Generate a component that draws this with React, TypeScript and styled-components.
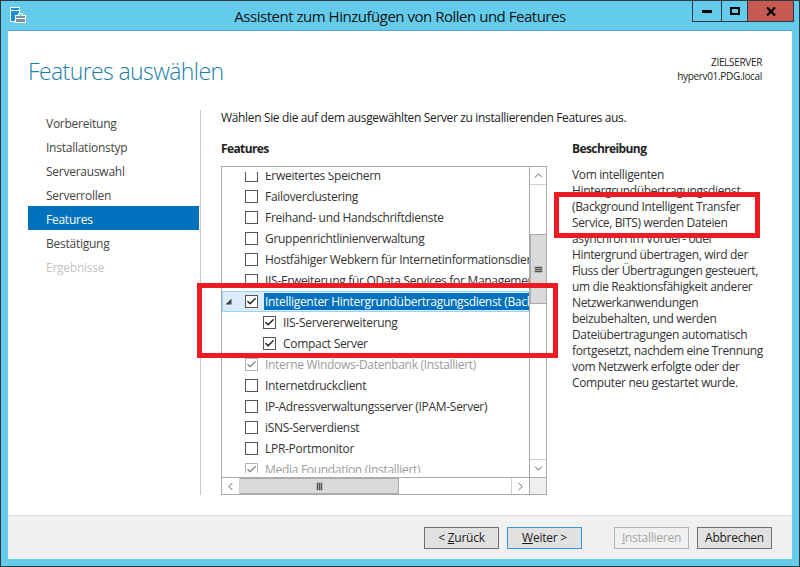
import React from "react";
import styled, { createGlobalStyle } from "styled-components";
import { ChevronUp, ChevronDown, ChevronLeft, ChevronRight, Check } from "lucide-react";

const GlobalStyle = createGlobalStyle`
  html, body { margin: 0; padding: 0; background: #65cbeb; }
  body { font-family: "Open Sans", "Noto Sans", sans-serif; font-size: 12px; letter-spacing: -0.25px; }
  * { box-sizing: border-box; }
`;

const Window = styled.div`
  position: relative;
  width: 800px;
  height: 567px;
  display: flex;
  flex-direction: column;
  background: #65cbeb;
  border: 1px solid #2f3a40;
  overflow: hidden;
`;

const TitleBar = styled.div`
  height: 30px;
  flex: none;
  display: flex;
  align-items: flex-start;
  position: relative;
`;

const AppIcon = styled.svg`
  margin: 6px 0 0 9px;
  flex: none;
`;

const Title = styled.div`
  position: absolute;
  left: 0;
  right: 0;
  top: 5px;
  text-align: center;
  font-size: 15px;
  letter-spacing: -0.48px;
  color: #0c1418;
`;

const Controls = styled.div`
  margin-left: auto;
  margin-right: 5px;
  display: flex;
  height: 21px;
  border: 1px solid #2f3a40;
  border-top: none;
`;

const Control = styled.div<{ $w: number; $close?: boolean }>`
  width: ${(p) => p.$w}px;
  display: flex;
  align-items: center;
  justify-content: center;
  background: ${(p) => (p.$close ? "#c75a50" : "transparent")};
  & + & { border-left: 1px solid #2f3a40; }
`;

const Dialog = styled.div`
  flex: 1;
  margin: 0 7px 7px 7px;
  display: flex;
  flex-direction: column;
  background: #fff;
  min-height: 0;
  box-shadow: 0 -1px 0 #5aa6c4;
`;

const Head = styled.div`
  height: 79px;
  flex: none;
  display: flex;
  justify-content: space-between;
  padding: 24px 30px 0 20px;
`;

const Heading = styled.h1`
  margin: 0;
  font-weight: 300;
  font-size: 23px;
  letter-spacing: -0.6px;
  line-height: 32px;
  color: #1b7fa6;
`;

const ServerInfo = styled.div`
  text-align: right;
  font-size: 10px;
  line-height: 14px;
  letter-spacing: -0.32px;
  color: #1c1c1c;
`;

const Body = styled.div`
  flex: 1;
  display: flex;
  min-height: 0;
  padding-left: 20px;
`;

const Sidebar = styled.nav`
  width: 172px;
  flex: none;
  height: 385px;
`;

const NavItem = styled.div<{ $active?: boolean; $disabled?: boolean }>`
  width: 171px;
  height: 24px;
  line-height: 27px;
  padding-left: 18px;
  background: ${(p) => (p.$active ? "#0071bc" : "transparent")};
  color: ${(p) => (p.$active ? "#fff" : p.$disabled ? "#c4c4c4" : "#444")};
`;

const Main = styled.div`
  width: 543px;
  flex: none;
  height: 385px;
  border-left: 1px solid #c9c9c9;
  padding-left: 20px;
`;

const Intro = styled.div`
  height: 30px;
  line-height: 16px;
  letter-spacing: -0.35px;
  color: #1c1c1c;
`;

const Columns = styled.div`
  display: flex;
  gap: 25px;
`;

const FeatureColumn = styled.div`
  width: 326px;
  flex: none;
`;

const SectionTitle = styled.div`
  font-weight: 700;
  line-height: 18px;
  height: 26px;
  letter-spacing: -0.6px;
  color: #222;
`;

const TreeBox = styled.div`
  width: 326px;
  height: 329px;
  border: 1px solid #ababab;
  display: grid;
  grid-template-columns: 307px 17px;
  grid-template-rows: 310px 17px;
  background: #fff;
`;

const TreeList = styled.div`
  padding: 5px 0 4px;
  min-height: 0;
  letter-spacing: -0.3px;
`;

const TreeViewport = styled.div`
  height: 100%;
  overflow: hidden;
  white-space: nowrap;
`;

const TreeInner = styled.div`
  margin-top: -7px;
`;

const Row = styled.div<{ $selected?: boolean }>`
  position: relative;
  height: 21px;
  display: flex;
  align-items: center;
  padding-left: 22px;
  color: #333;
  border: 1px solid ${(p) => (p.$selected ? "#99d1ff" : "transparent")};
  background: ${(p) => (p.$selected ? "#dcecfb" : "transparent")};
`;

const ChildRow = styled(Row)`
  padding-left: 40px;
`;

const Expander = styled.svg`
  position: absolute;
  left: 2px;
  top: 6px;
`;

const Box = styled.span<{ $dim?: boolean }>`
  width: 13px;
  height: 13px;
  flex: none;
  display: flex;
  align-items: center;
  justify-content: center;
  margin-right: 7px;
  border: 1px solid ${(p) => (p.$dim ? "#b3b3b3" : "#555")};
  color: ${(p) => (p.$dim ? "#8a8a8a" : "#1c1c1c")};
  background: #fff;
`;

const Label = styled.span<{ $dim?: boolean; $selected?: boolean }>`
  color: ${(p) => (p.$selected ? "#fff" : p.$dim ? "#9b9b9b" : "#333")};
  background: ${(p) => (p.$selected ? "#0071bc" : "transparent")};
  line-height: 17px;
  padding: 0 1px;
  margin-left: -1px;
  flex: 1;
`;

const VScroll = styled.div`
  border-left: 1px solid #ababab;
  display: flex;
  flex-direction: column;
  background: #fff;
`;

const ScrollBtn = styled.div`
  flex: none;
  height: 17px;
  display: flex;
  align-items: center;
  justify-content: center;
  color: #555;
`;

const VTrack = styled.div`
  flex: 1;
  padding-top: 49px;
  border-top: 1px solid #d0d0d0;
  border-bottom: 1px solid #d0d0d0;
`;

const VThumb = styled.div`
  height: 70px;
  background: #dadada;
  border: 1px solid #ababab;
  border-right: none;
  display: flex;
  align-items: center;
  justify-content: center;
  flex-direction: column;
  gap: 1px;
`;

const GripH = styled.span`
  width: 7px;
  height: 1px;
  background: #555;
  box-shadow: 0 0 0 0.3px #666;
`;

const HScroll = styled.div`
  border-top: 1px solid #ababab;
  display: flex;
  background: #fff;
`;

const HBtn = styled.div`
  width: 17px;
  flex: none;
  display: flex;
  align-items: center;
  justify-content: center;
  color: #555;
`;

const HTrack = styled.div`
  flex: 1;
  border-left: 1px solid #d0d0d0;
  border-right: 1px solid #d0d0d0;
`;

const HThumb = styled.div`
  width: 159px;
  height: 100%;
  background: #dadada;
  border: 1px solid #ababab;
  border-left: none;
  display: flex;
  align-items: center;
  justify-content: center;
  gap: 1px;
`;

const GripV = styled.span`
  width: 1px;
  height: 7px;
  background: #555;
  box-shadow: 0 0 0 0.3px #666;
`;

const Corner = styled.div`
  background: #f0f0f0;
  border-top: 1px solid #ababab;
  border-left: 1px solid #ababab;
`;

const Description = styled.div`
  width: 195px;
  flex: none;
`;

const DescText = styled.div`
  line-height: 16px;
  color: #333;
  white-space: nowrap;
  letter-spacing: -0.36px;
  margin-top: 1px;
`;

const Footer = styled.div`
  height: 44px;
  flex: none;
  margin-top: auto;
  display: flex;
  align-items: center;
  justify-content: flex-end;
  gap: 8px;
  padding: 0 20px 0 0;
  background: #f0f0f0;
  border-top: 1px solid #dcdcdc;
`;

const Btn = styled.div<{ $focus?: boolean; $disabled?: boolean; $gap?: number }>`
  width: 75px;
  height: 22px;
  display: flex;
  align-items: center;
  justify-content: center;
  background: ${(p) => (p.$disabled ? "#f0f0f0" : "#e1e1e1")};
  border: 1px solid ${(p) => (p.$focus ? "#3d93e8" : p.$disabled ? "#b5b5b5" : "#6f6f6f")};
  color: ${(p) => (p.$disabled ? "#a5a5a5" : "#1c1c1c")};
  margin-right: ${(p) => p.$gap ?? 0}px;
  u { text-decoration: underline; }
`;

const Callout = styled.div<{ $l: number; $t: number; $w: number; $h: number }>`
  position: absolute;
  left: ${(p) => p.$l}px;
  top: ${(p) => p.$t}px;
  width: ${(p) => p.$w}px;
  height: ${(p) => p.$h}px;
  border: 5px solid #ed1c24;
  pointer-events: none;
`;

type Feature = { label: string; checked?: boolean; dim?: boolean };

const beforeFeatures: Feature[] = [
  { label: "Erweitertes Speichern" },
  { label: "Failoverclustering" },
  { label: "Freihand- und Handschriftdienste" },
  { label: "Gruppenrichtlinienverwaltung" },
  { label: "Hostfähiger Webkern für Internetinformationsdienste" },
  { label: "IIS-Erweiterung für OData Services for Management" },
];

const afterFeatures: Feature[] = [
  { label: "Interne Windows-Datenbank (Installiert)", checked: true, dim: true },
  { label: "Internetdruckclient" },
  { label: "IP-Adressverwaltungsserver (IPAM-Server)" },
  { label: "iSNS-Serverdienst" },
  { label: "LPR-Portmonitor" },
  { label: "Media Foundation (Installiert)", checked: true, dim: true },
];

const steps = ["Vorbereitung", "Installationstyp", "Serverauswahl", "Serverrollen", "Features", "Bestätigung", "Ergebnisse"];

const descLines = [
  "Vom intelligenten",
  "Hintergrundübertragungsdienst",
  "(Background Intelligent Transfer",
  "Service, BITS) werden Dateien",
  "asynchron im Vorder- oder",
  "Hintergrund übertragen, wird der",
  "Fluss der Übertragungen gesteuert,",
  "um die Reaktionsfähigkeit anderer",
  "Netzwerkanwendungen",
  "beizubehalten, und werden",
  "Dateiübertragungen automatisch",
  "fortgesetzt, nachdem eine Trennung",
  "vom Netzwerk erfolgte oder der",
  "Computer neu gestartet wurde.",
];

const CheckBox: React.FC<{ checked?: boolean; dim?: boolean }> = ({ checked, dim }) => (
  <Box $dim={dim}>{checked && <Check size={11} strokeWidth={3} />}</Box>
);

const FeatureRow: React.FC<{ item: Feature }> = ({ item }) => (
  <Row>
    <CheckBox checked={item.checked} dim={item.dim} />
    <Label $dim={item.dim}>{item.label}</Label>
  </Row>
);

export default function App() {
  return (
    <>
      <GlobalStyle />
      <Window>
        <TitleBar>
          <AppIcon width="16" height="16" viewBox="0 0 16 16">
            <rect x="0.5" y="0.5" width="9" height="14" fill="#1b8fd0" stroke="#fff" />
            <rect x="1" y="3" width="8" height="1" fill="#fff" />
            <rect x="5.5" y="8.5" width="10" height="7" fill="#7d8f9c" stroke="#fff" />
            <path d="M8.5 8.5V6.5h4v2" fill="#65cbeb" stroke="#fff" />
            <rect x="6" y="11" width="9" height="1" fill="#fff" />
          </AppIcon>
          <Title>Assistent zum Hinzufügen von Rollen und Features</Title>
          <Controls>
            <Control $w={28}>
              <svg width="10" height="4" viewBox="0 0 10 4"><rect width="10" height="3" y="1" fill="#000" /></svg>
            </Control>
            <Control $w={26}>
              <svg width="10" height="8" viewBox="0 0 10 8"><rect x="1" y="1" width="8" height="6" fill="none" stroke="#000" strokeWidth="2" /></svg>
            </Control>
            <Control $w={46} $close>
              <svg width="10" height="9" viewBox="0 0 10 9"><path d="M1 .5l8 8M9 .5l-8 8" stroke="#000" strokeWidth="2.2" fill="none" /></svg>
            </Control>
          </Controls>
        </TitleBar>
        <Dialog>
          <Head>
            <Heading>Features auswählen</Heading>
            <ServerInfo>
              ZIELSERVER
              <br />
              hyperv01.PDG.local
            </ServerInfo>
          </Head>
          <Body>
            <Sidebar>
              {steps.map((s) => (
                <NavItem key={s} $active={s === "Features"} $disabled={s === "Ergebnisse"}>
                  {s}
                </NavItem>
              ))}
            </Sidebar>
            <Main>
              <Intro>Wählen Sie die auf dem ausgewählten Server zu installierenden Features aus.</Intro>
              <Columns>
                <FeatureColumn>
                  <SectionTitle>Features</SectionTitle>
                  <TreeBox>
                    <TreeList>
                      <TreeViewport>
                        <TreeInner>
                          {beforeFeatures.map((f) => (
                            <FeatureRow key={f.label} item={f} />
                          ))}
                          <Row $selected>
                            <Expander width="7" height="7" viewBox="0 0 7 7">
                              <path d="M6.5 .5v6h-6z" fill="#444" />
                            </Expander>
                            <CheckBox checked />
                            <Label $selected>Intelligenter Hintergrundübertragungsdienst (Background</Label>
                          </Row>
                          <ChildRow>
                            <CheckBox checked />
                            <Label>IIS-Servererweiterung</Label>
                          </ChildRow>
                          <ChildRow>
                            <CheckBox checked />
                            <Label>Compact Server</Label>
                          </ChildRow>
                          {afterFeatures.map((f) => (
                            <FeatureRow key={f.label} item={f} />
                          ))}
                        </TreeInner>
                      </TreeViewport>
                    </TreeList>
                    <VScroll>
                      <ScrollBtn>
                        <ChevronUp size={13} strokeWidth={1.7} />
                      </ScrollBtn>
                      <VTrack>
                        <VThumb>
                          <GripH />
                          <GripH />
                          <GripH />
                        </VThumb>
                      </VTrack>
                      <ScrollBtn>
                        <ChevronDown size={13} strokeWidth={1.7} />
                      </ScrollBtn>
                    </VScroll>
                    <HScroll>
                      <HBtn>
                        <ChevronLeft size={13} strokeWidth={1.7} />
                      </HBtn>
                      <HTrack>
                        <HThumb>
                          <GripV />
                          <GripV />
                          <GripV />
                        </HThumb>
                      </HTrack>
                      <HBtn>
                        <ChevronRight size={13} strokeWidth={1.7} />
                      </HBtn>
                    </HScroll>
                    <Corner />
                  </TreeBox>
                </FeatureColumn>
                <Description>
                  <SectionTitle>Beschreibung</SectionTitle>
                  <DescText>
                    {descLines.map((l) => (
                      <div key={l}>{l}</div>
                    ))}
                  </DescText>
                </Description>
              </Columns>
            </Main>
          </Body>
          <Footer>
            <Btn>
              &lt;&nbsp;<u>Z</u>urück
            </Btn>
            <Btn $focus $gap={24}>
              <u>W</u>eiter &gt;
            </Btn>
            <Btn $disabled>
              <u>I</u>nstallieren
            </Btn>
            <Btn>Abbrechen</Btn>
          </Footer>
        </Dialog>
        <Callout $l={553} $t={191} $w={206} $h={46} />
        <Callout $l={196} $t={282} $w={361} $h={75} />
      </Window>
    </>
  );
}
